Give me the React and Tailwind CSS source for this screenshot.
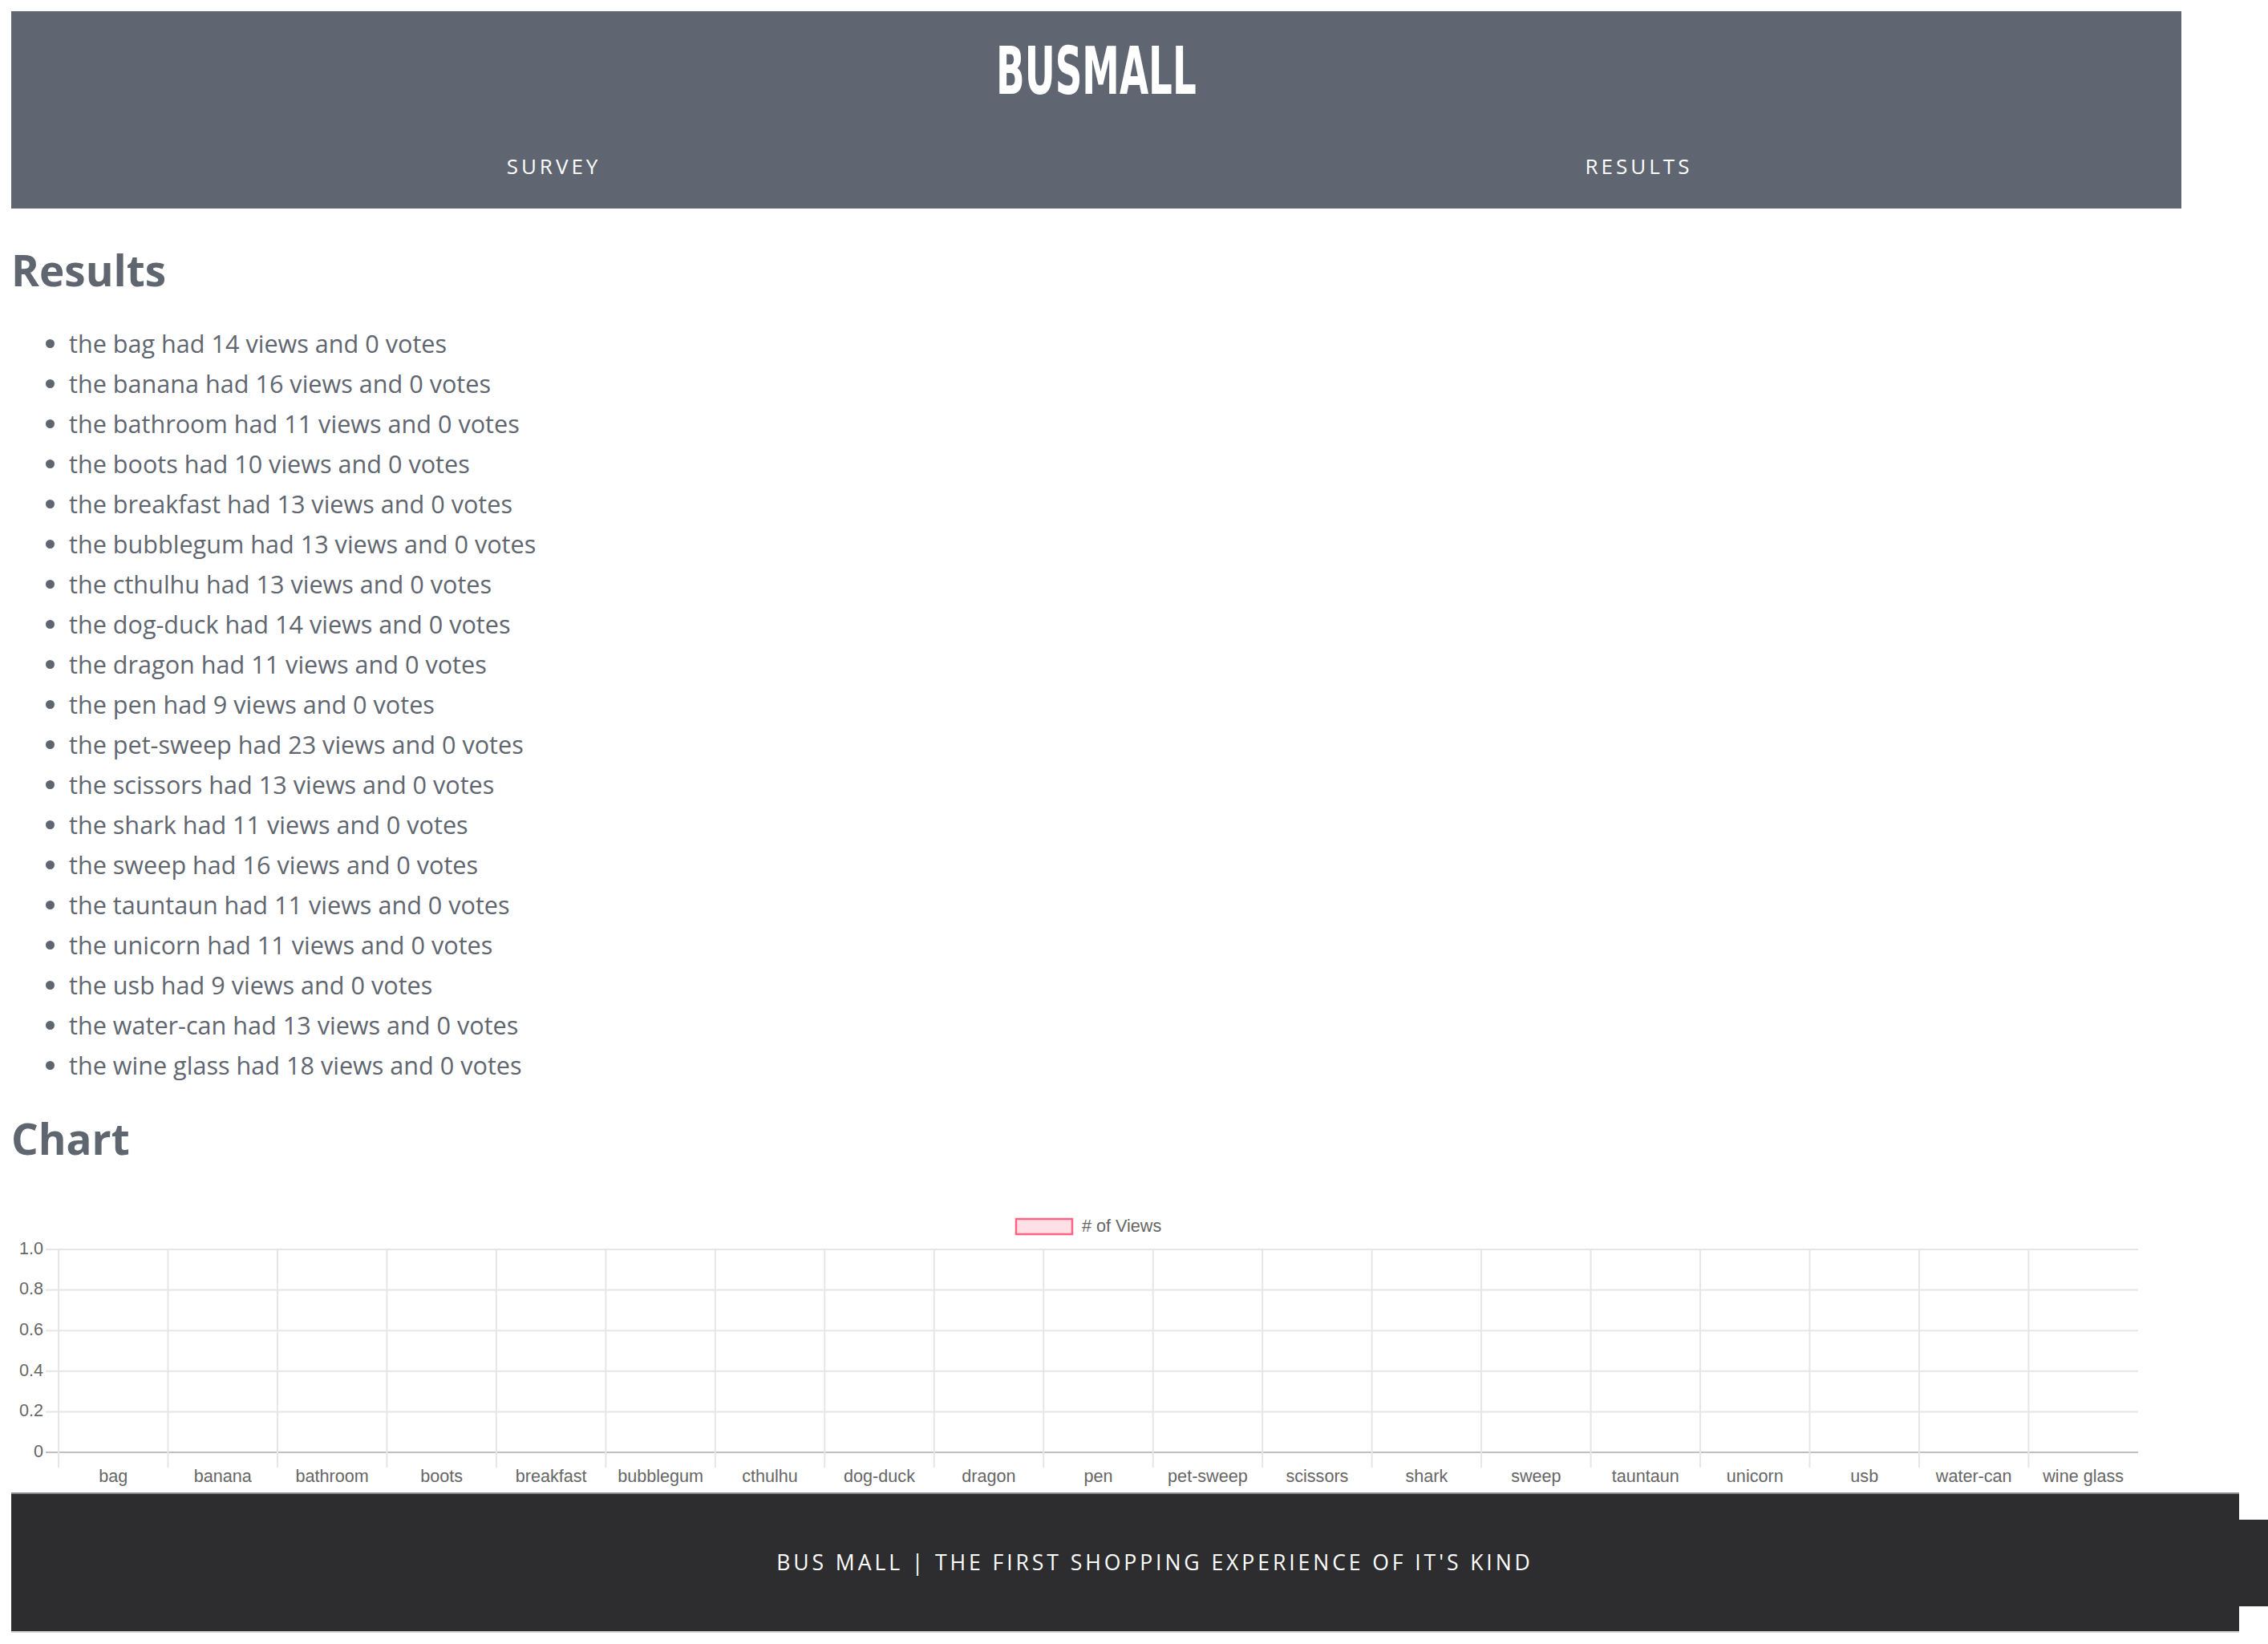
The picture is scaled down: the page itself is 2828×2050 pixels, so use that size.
import React from "react";

const items = [
  ["bag", 14], ["banana", 16], ["bathroom", 11], ["boots", 10], ["breakfast", 13],
  ["bubblegum", 13], ["cthulhu", 13], ["dog-duck", 14], ["dragon", 11], ["pen", 9],
  ["pet-sweep", 23], ["scissors", 13], ["shark", 11], ["sweep", 16], ["tauntaun", 11],
  ["unicorn", 11], ["usb", 9], ["water-can", 13], ["wine glass", 18],
];

function Chart() {
  const colW = 136.47;
  const x0 = 59;
  const xEnd = 2652;
  const yTop = 68;
  const yStep = 50.6;
  const yLabels = ["1.0", "0.8", "0.6", "0.4", "0.2", "0"];
  const font = { fontFamily: "'Liberation Sans', Arial, sans-serif" };
  return (
    <svg width="2700" height="371" className="block" style={font}>
      <rect x="1253" y="30" width="70" height="19" fill="#ffe0e6" stroke="#ff6384" strokeWidth="2.5" />
      <text x="1335" y="40" fontSize="21.6" fill="#666" dominantBaseline="middle">
        # of Views
      </text>
      {yLabels.map((l, i) => {
        const y = yTop + i * yStep;
        return (
          <g key={l}>
            <line x1="43" x2={xEnd} y1={y} y2={y} stroke={i === 5 ? "#bfbfbf" : "#e6e6e6"} strokeWidth="2" />
            <text x="40" y={y} fontSize="21.6" fill="#666" textAnchor="end" dominantBaseline="middle">
              {l}
            </text>
          </g>
        );
      })}
      {items.map(([n], k) => {
        const x = x0 + k * colW;
        return (
          <g key={n}>
            <line x1={x} x2={x} y1={yTop} y2="340" stroke="#e6e6e6" strokeWidth="2" />
            <text x={x + colW / 2} y="352" fontSize="21.6" fill="#666" textAnchor="middle" dominantBaseline="middle">
              {n}
            </text>
          </g>
        );
      })}
    </svg>
  );
}

export default function App() {
  return (
    <div className="w-[2828px] min-h-[2050px] bg-white overflow-hidden" style={{ fontFamily: "'Open Sans', sans-serif" }}>
      <header className="ml-[14px] mt-[14px] w-[2706px] h-[246px] bg-[#5f6671] flex flex-col">
        <div className="mt-[34px] h-[82px] flex justify-center">
          <h1
            className="text-[82px] leading-none font-bold text-white scale-x-[0.634] font-stretch-condensed"
            style={{ fontFamily: "'DejaVu Sans Condensed', 'DejaVu Sans', sans-serif" }}
          >
            BUSMALL
          </h1>
        </div>
        <nav className="mt-[57px] flex">
          <a className="flex-1 text-center text-white text-[26px] leading-[40px] font-normal tracking-[4px]">SURVEY</a>
          <a className="flex-1 text-center text-white text-[26px] leading-[40px] font-normal tracking-[4px]">RESULTS</a>
        </nav>
      </header>
      <main className="px-[14px]">
        <h2 className="mt-[50px] text-[53px] leading-none font-bold text-[#5f6670]">Results</h2>
        <ul className="mt-[40px] list-disc pl-[72px] text-[30.6px] leading-[50px] text-[#5f6670]">
          {items.map(([n, v]) => (
            <li key={n}>{`the ${n} had ${v} views and 0 votes`}</li>
          ))}
        </ul>
        <h2 className="mt-[40px] text-[53px] leading-none font-bold text-[#5f6670]">Chart</h2>
        <div className="mt-[44px]">
          <Chart />
        </div>
      </main>
      <footer className="flex items-center">
        <div className="ml-[14px] w-[2778px] h-[175px] bg-[#2d2d2f] border-t-2 border-b-2 border-t-[#8c8c8c] border-b-[#d4d4d4] flex items-center justify-center pl-[74px]">
          <p className="text-white text-[26.6px] tracking-[3.9px] font-normal">
            BUS MALL | THE FIRST SHOPPING EXPERIENCE OF IT'S KIND
          </p>
        </div>
        <div className="w-[36px] h-[108px] bg-[#2d2d2f]" />
      </footer>
    </div>
  );
}
